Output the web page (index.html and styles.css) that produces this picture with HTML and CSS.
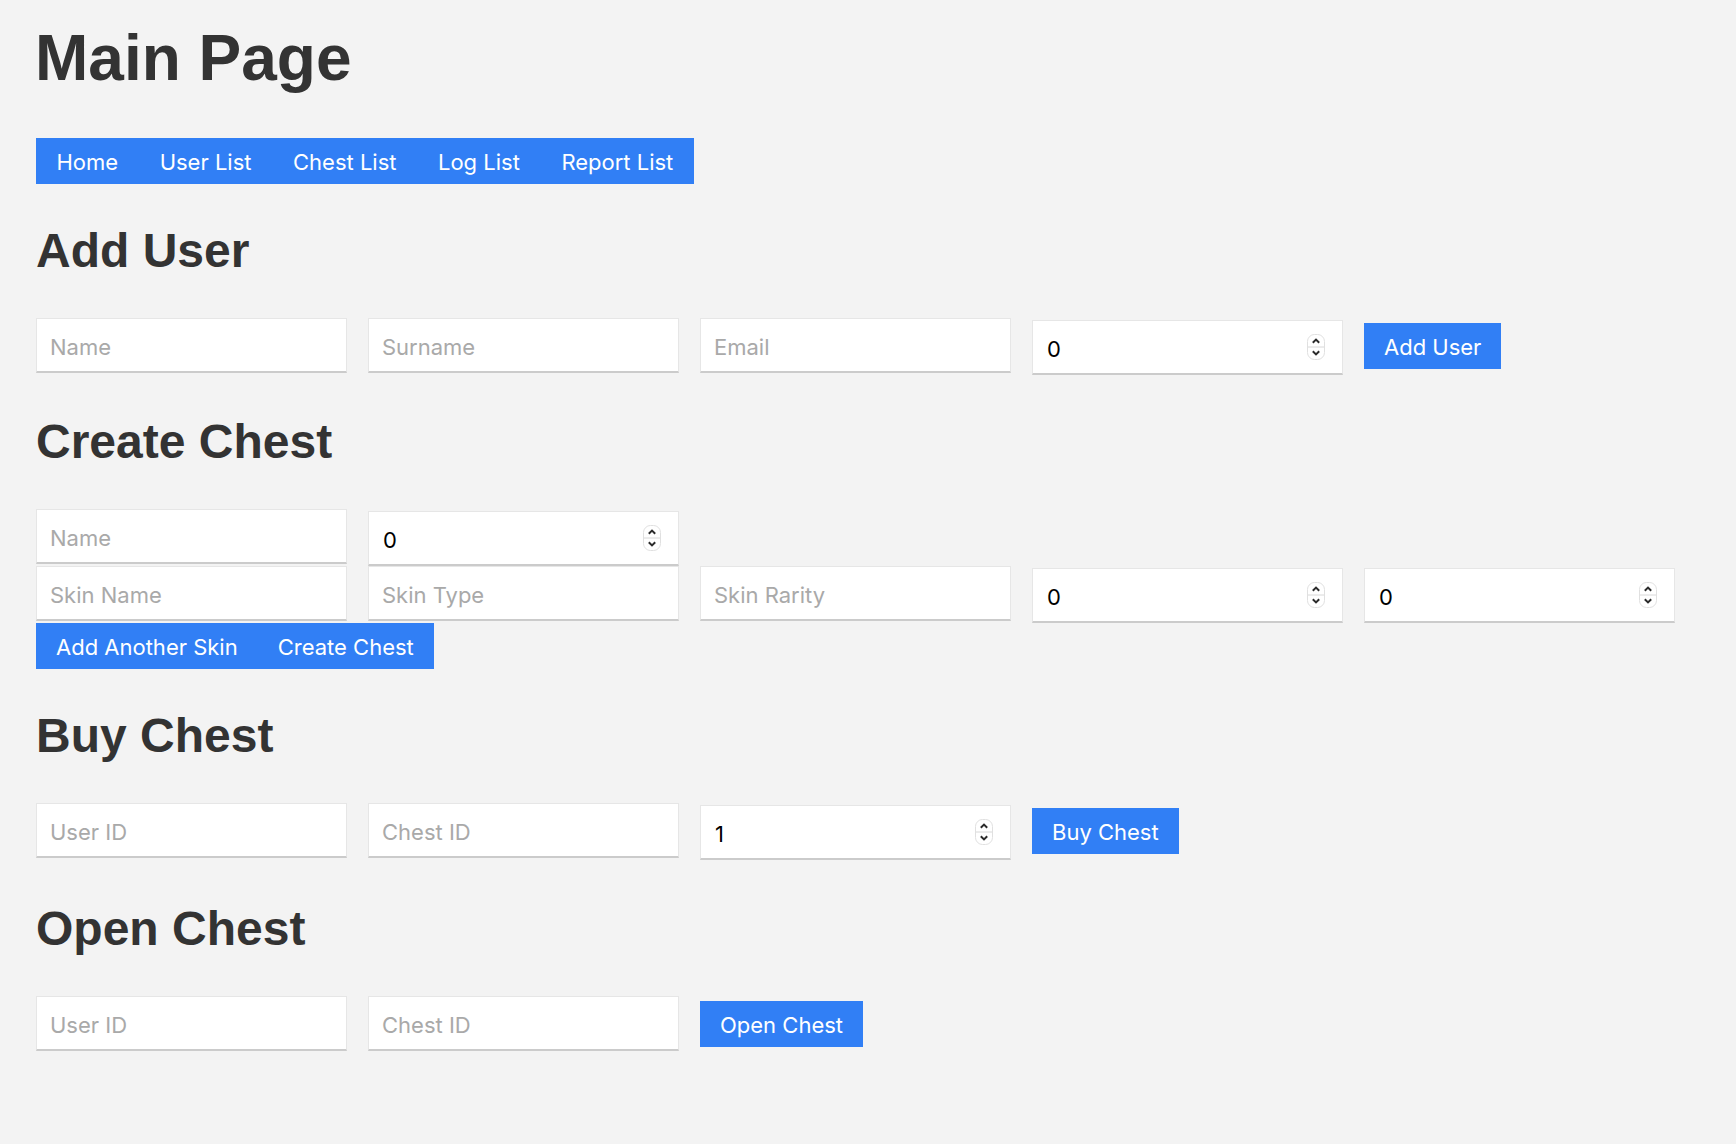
FILE: index.html
```html
<!DOCTYPE html>
<html lang="en">
<head>
<meta charset="utf-8">
<title>Main Page</title>
<link rel="stylesheet" href="styles.css">
</head>
<body>
<div class="page">
  <h1 class="title">Main Page</h1>
  <nav class="nav">
    <a class="nav-link" href="#">Home</a>
    <a class="nav-link" href="#">User List</a>
    <a class="nav-link" href="#">Chest List</a>
    <a class="nav-link" href="#">Log List</a>
    <a class="nav-link" href="#">Report List</a>
  </nav>

  <h2 class="section-title">Add User</h2>
  <div class="row">
    <input class="field" type="text" placeholder="Name">
    <input class="field" type="text" placeholder="Surname">
    <input class="field" type="text" placeholder="Email">
    <span class="num-wrap"><input class="field num" type="number" value="0"><svg class="stepper" width="18" height="26" viewBox="0 0 18 26"><rect x="0.5" y="0.5" width="17" height="25" rx="7" fill="#fff" stroke="#e0e0e0"/><line x1="1" y1="13" x2="17" y2="13" stroke="#d8d8d8"/><path d="M5.8 8.8 L9 5.6 L12.2 8.8" fill="none" stroke="#2b2b2b" stroke-width="2"/><path d="M5.8 17.2 L9 20.4 L12.2 17.2" fill="none" stroke="#2b2b2b" stroke-width="2"/></svg></span>
    <button class="btn btn-row">Add User</button>
  </div>

  <h2 class="section-title">Create Chest</h2>
  <div class="row">
    <input class="field" type="text" placeholder="Name">
    <span class="num-wrap"><input class="field num" type="number" value="0"><svg class="stepper" width="18" height="26" viewBox="0 0 18 26"><rect x="0.5" y="0.5" width="17" height="25" rx="7" fill="#fff" stroke="#e0e0e0"/><line x1="1" y1="13" x2="17" y2="13" stroke="#d8d8d8"/><path d="M5.8 8.8 L9 5.6 L12.2 8.8" fill="none" stroke="#2b2b2b" stroke-width="2"/><path d="M5.8 17.2 L9 20.4 L12.2 17.2" fill="none" stroke="#2b2b2b" stroke-width="2"/></svg></span>
  </div>
  <div class="row">
    <input class="field" type="text" placeholder="Skin Name">
    <input class="field" type="text" placeholder="Skin Type">
    <input class="field" type="text" placeholder="Skin Rarity">
    <span class="num-wrap"><input class="field num" type="number" value="0"><svg class="stepper" width="18" height="26" viewBox="0 0 18 26"><rect x="0.5" y="0.5" width="17" height="25" rx="7" fill="#fff" stroke="#e0e0e0"/><line x1="1" y1="13" x2="17" y2="13" stroke="#d8d8d8"/><path d="M5.8 8.8 L9 5.6 L12.2 8.8" fill="none" stroke="#2b2b2b" stroke-width="2"/><path d="M5.8 17.2 L9 20.4 L12.2 17.2" fill="none" stroke="#2b2b2b" stroke-width="2"/></svg></span>
    <span class="num-wrap"><input class="field num" type="number" value="0"><svg class="stepper" width="18" height="26" viewBox="0 0 18 26"><rect x="0.5" y="0.5" width="17" height="25" rx="7" fill="#fff" stroke="#e0e0e0"/><line x1="1" y1="13" x2="17" y2="13" stroke="#d8d8d8"/><path d="M5.8 8.8 L9 5.6 L12.2 8.8" fill="none" stroke="#2b2b2b" stroke-width="2"/><path d="M5.8 17.2 L9 20.4 L12.2 17.2" fill="none" stroke="#2b2b2b" stroke-width="2"/></svg></span>
  </div>
  <div class="btn-group">
    <button class="btn">Add Another Skin</button>
    <button class="btn">Create Chest</button>
  </div>

  <h2 class="section-title">Buy Chest</h2>
  <div class="row">
    <input class="field" type="text" placeholder="User ID">
    <input class="field" type="text" placeholder="Chest ID">
    <span class="num-wrap"><input class="field num" type="number" value="1"><svg class="stepper" width="18" height="26" viewBox="0 0 18 26"><rect x="0.5" y="0.5" width="17" height="25" rx="7" fill="#fff" stroke="#e0e0e0"/><line x1="1" y1="13" x2="17" y2="13" stroke="#d8d8d8"/><path d="M5.8 8.8 L9 5.6 L12.2 8.8" fill="none" stroke="#2b2b2b" stroke-width="2"/><path d="M5.8 17.2 L9 20.4 L12.2 17.2" fill="none" stroke="#2b2b2b" stroke-width="2"/></svg></span>
    <button class="btn btn-row">Buy Chest</button>
  </div>

  <h2 class="section-title section-last">Open Chest</h2>
  <div class="row">
    <input class="field" type="text" placeholder="User ID">
    <input class="field" type="text" placeholder="Chest ID">
    <button class="btn btn-row">Open Chest</button>
  </div>
</div>
</body>
</html>
```

FILE: styles.css
```css
html, body {
  margin: 0;
  padding: 0;
  background: #f3f3f3;
}

.page {
  padding: 0 36px;
  font-family: "Inter", "Noto Sans", sans-serif;
}

.title {
  margin: 20px 0 41px -1px;
  font-family: "Liberation Sans", Arial, sans-serif;
  font-weight: 700;
  font-size: 64px;
  line-height: 77px;
  color: #333;
}

.nav {
  display: inline-flex;
  background: #317ff5;
  height: 46px;
}

.nav-link {
  display: block;
  padding: 2px 21px 0 20.5px;
  line-height: 44px;
  font-size: 22px;
  color: #fff;
  text-decoration: none;
}

.section-title {
  margin: 38px 0;
  font-family: "Liberation Sans", Arial, sans-serif;
  font-weight: 700;
  font-size: 48px;
  line-height: 58px;
  color: #333;
}

.section-last {
  margin-top: 40px;
}

.row {
  display: flex;
  align-items: flex-start;
  gap: 21px;
}

.field {
  box-sizing: border-box;
  width: 311px;
  height: 55px;
  margin: 0;
  padding: 3px 13px 0;
  border: 1px solid #e6e6e6;
  border-bottom: 2px solid #cbcbcb;
  border-radius: 0;
  background: #fff;
  font-family: "Inter", "Noto Sans", sans-serif;
  font-size: 22px;
  color: #000;
  outline: none;
}

.field::placeholder {
  color: #a9a9a9;
}

.num-wrap {
  position: relative;
  display: block;
  margin-top: 2px;
}

.num {
  padding-left: 14px;
  -moz-appearance: textfield;
}

.num::-webkit-outer-spin-button,
.num::-webkit-inner-spin-button {
  -webkit-appearance: none;
  margin: 0;
}

.stepper {
  position: absolute;
  right: 18px;
  top: 14px;
}

.btn {
  height: 46px;
  padding: 2px 20px 0;
  margin: 0;
  border: none;
  border-radius: 0;
  background: #317ff5;
  color: #fff;
  font-family: "Inter", "Noto Sans", sans-serif;
  font-size: 22px;
  cursor: pointer;
}

.btn-row {
  margin-top: 5px;
}

.btn-group {
  display: inline-flex;
  background: #317ff5;
}
```
